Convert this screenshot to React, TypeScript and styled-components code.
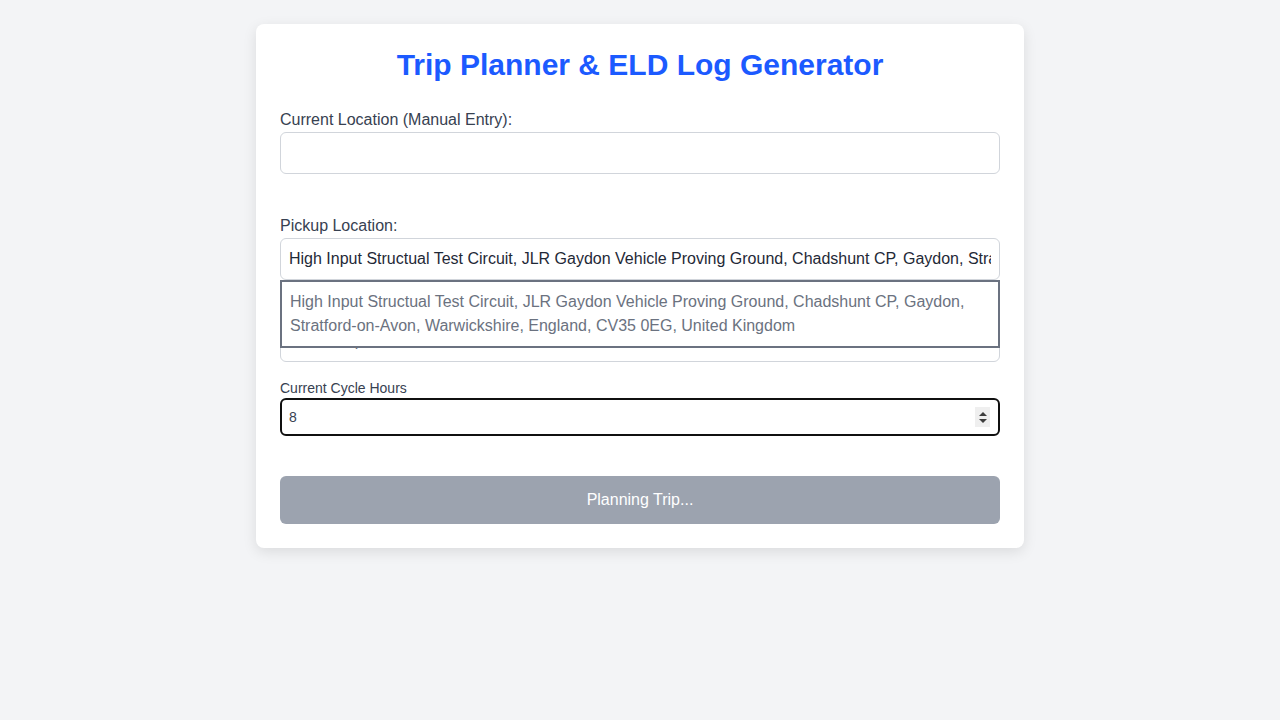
import React from "react";
import styled, { createGlobalStyle } from "styled-components";

const GlobalStyle = createGlobalStyle`
  html, body {
    margin: 0;
    padding: 0;
    background: #f3f4f6;
    font-family: "Liberation Sans", Arial, sans-serif;
  }
  * { box-sizing: border-box; }
`;

const Page = styled.div`
  padding: 24px 0;
  min-height: 720px;
`;

const Card = styled.form`
  width: 768px;
  margin: 0 auto;
  background: #ffffff;
  border-radius: 8px;
  box-shadow: 0 4px 14px rgba(0, 0, 0, 0.1);
  padding: 23px 24px 24px;
  display: flex;
  flex-direction: column;
`;

const Title = styled.h1`
  margin: 0 0 27px;
  font-size: 30px;
  line-height: 36px;
  font-weight: 700;
  color: #1c5aff;
  text-align: center;
`;

const Field = styled.div<{ $gap: number }>`
  position: relative;
  display: flex;
  flex-direction: column;
  margin-bottom: ${(p) => p.$gap}px;
`;

const Label = styled.label<{ $small?: boolean }>`
  font-size: ${(p) => (p.$small ? "14px" : "16px")};
  line-height: ${(p) => (p.$small ? "16px" : "20px")};
  color: #374151;
  margin-bottom: 2px;
`;

const TextInput = styled.input`
  width: 100%;
  height: 42px;
  padding: 8px;
  font-family: inherit;
  font-size: 16px;
  line-height: 24px;
  color: #1f2937;
  background: #ffffff;
  border: 1px solid #d1d5db;
  border-radius: 6px;
  outline: none;
  &::placeholder {
    color: #6b7280;
  }
`;

const Suggestions = styled.ul`
  position: absolute;
  top: 100%;
  left: 0;
  right: 0;
  z-index: 5;
  margin: 0;
  padding: 0;
  list-style: none;
  background: #ffffff;
  border: 2px solid #6b7280;
`;

const Suggestion = styled.li`
  padding: 8px;
  font-size: 16px;
  line-height: 24px;
  color: #6b7280;
`;

const NumberWrap = styled.div`
  position: relative;
`;

const NumberInput = styled.input`
  width: 100%;
  height: 38px;
  padding: 8px 7px;
  font-family: inherit;
  font-size: 14px;
  line-height: 20px;
  color: #374151;
  background: #ffffff;
  border: 2px solid #101010;
  border-radius: 6px;
  outline: none;
`;

const Spinner = styled.div`
  position: absolute;
  right: 10px;
  top: 9px;
  width: 15px;
  height: 20px;
  background: #efefef;
  display: flex;
  flex-direction: column;
  align-items: center;
  justify-content: center;
  gap: 3px;
`;

const Arrow = styled.span<{ $down?: boolean }>`
  width: 0;
  height: 0;
  border-left: 4px solid transparent;
  border-right: 4px solid transparent;
  ${(p) =>
    p.$down
      ? "border-top: 4px solid #3d3d3d;"
      : "border-bottom: 4px solid #3d3d3d;"}
`;

const SubmitButton = styled.button`
  height: 48px;
  width: 100%;
  border: none;
  border-radius: 6px;
  background: #9ca3af;
  color: #ffffff;
  font-family: inherit;
  font-size: 16px;
  cursor: not-allowed;
`;

const pickup =
  "High Input Structual Test Circuit, JLR Gaydon Vehicle Proving Ground, Chadshunt CP, Gaydon, Stratford-on-Avon, Warwickshire, England, CV35 0EG, United Kingdom";

export default function App() {
  return (
    <>
      <GlobalStyle />
      <Page>
        <Card onSubmit={(e) => e.preventDefault()}>
          <Title>Trip Planner &amp; ELD Log Generator</Title>

          <Field $gap={42}>
            <Label>Current Location (Manual Entry):</Label>
            <TextInput type="text" defaultValue="" />
          </Field>

          <Field $gap={18}>
            <Label>Pickup Location:</Label>
            <TextInput type="text" defaultValue={pickup} />
            <Suggestions>
              <Suggestion>{pickup}</Suggestion>
            </Suggestions>
          </Field>

          <Field $gap={18}>
            <Label>Dropoff Location:</Label>
            <TextInput type="text" placeholder="Enter dropoff location" />
          </Field>

          <Field $gap={40}>
            <Label $small>Current Cycle Hours</Label>
            <NumberWrap>
              <NumberInput type="text" defaultValue="8" />
              <Spinner>
                <Arrow />
                <Arrow $down />
              </Spinner>
            </NumberWrap>
          </Field>

          <SubmitButton type="submit" disabled>
            Planning Trip...
          </SubmitButton>
        </Card>
      </Page>
    </>
  );
}
